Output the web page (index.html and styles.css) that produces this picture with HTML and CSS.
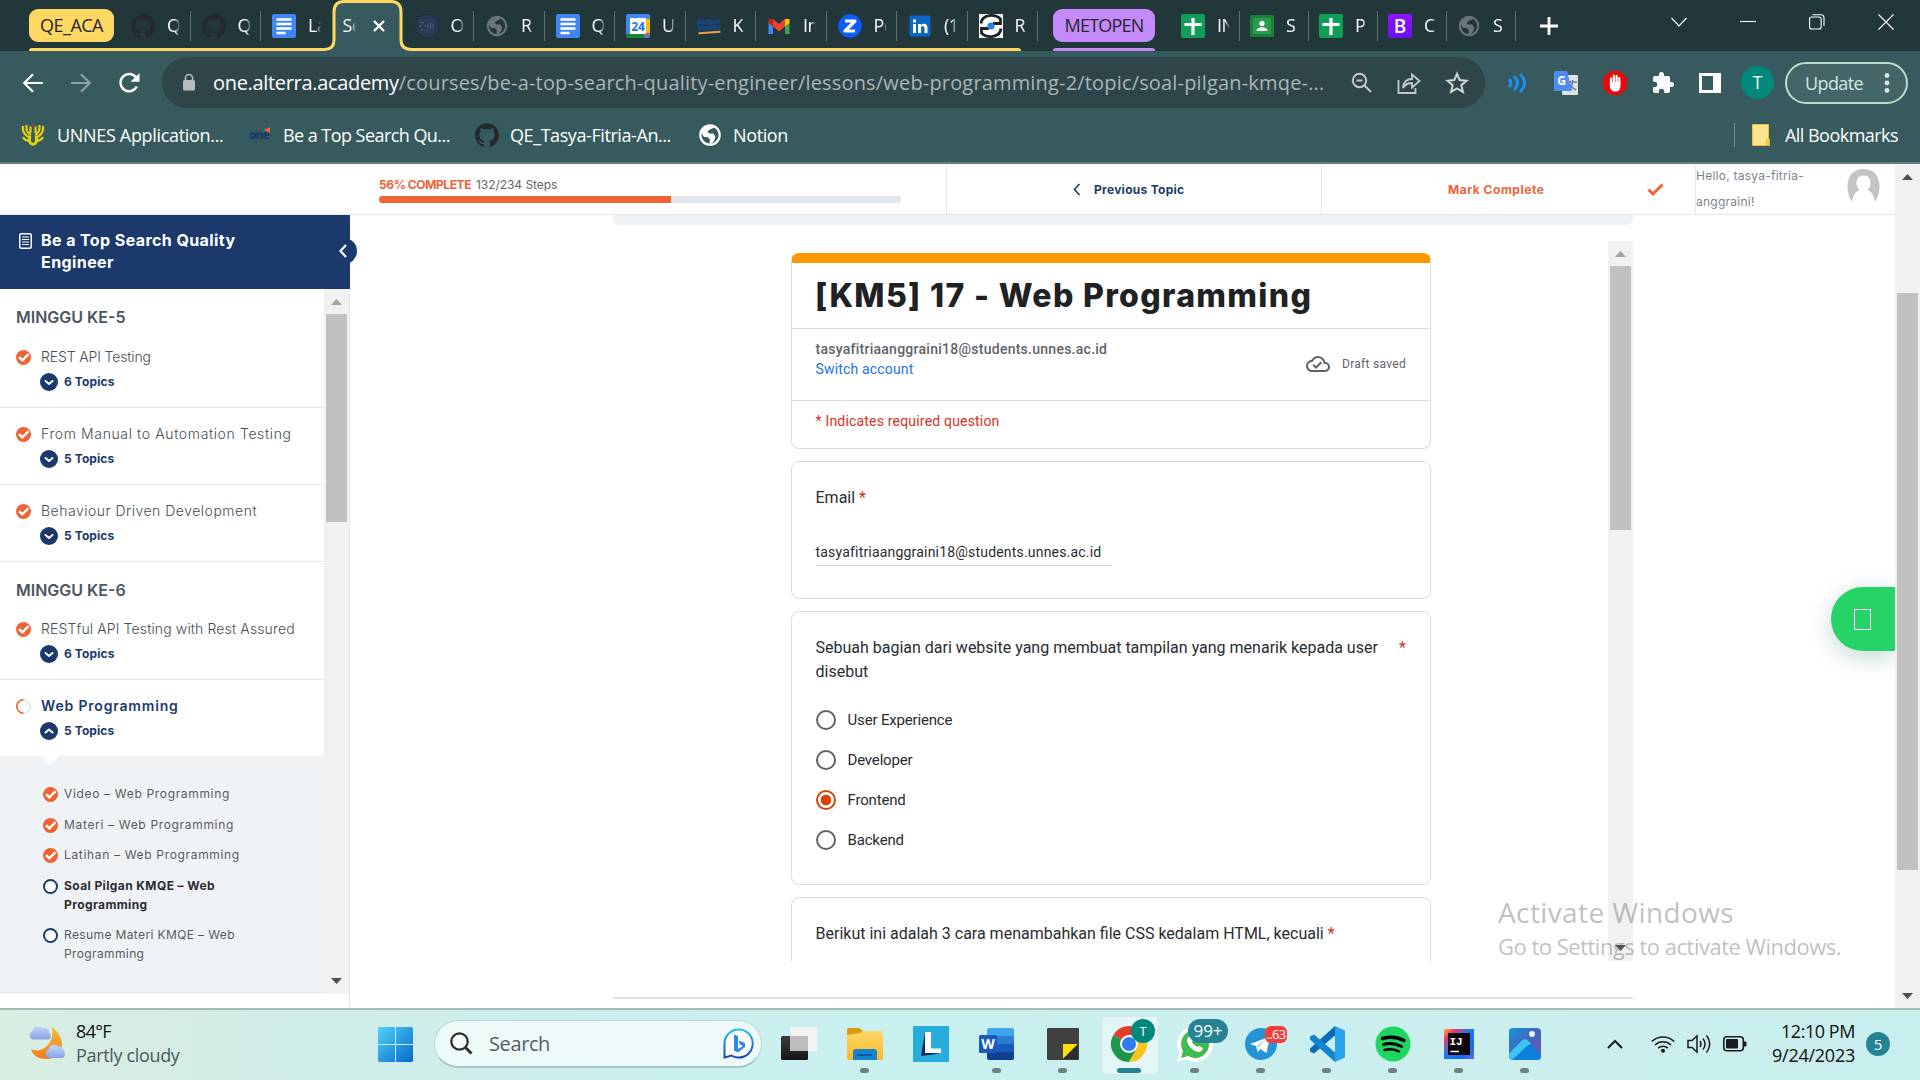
FILE: index.html
```html
<!DOCTYPE html>
<html lang="en">
<head>
<meta charset="utf-8">
<title>Soal Pilgan KMQE – Web Programming</title>
<link rel="stylesheet" href="styles.css">
</head>
<body>
<svg class="defs" aria-hidden="true">
  <defs>
    <linearGradient id="winGrad" x1="0" y1="0" x2="1" y2="1"><stop offset="0" stop-color="#4fd3fb"/><stop offset="1" stop-color="#0669c9"/></linearGradient>
    <linearGradient id="moonGrad" x1="0" y1="0" x2="0" y2="1"><stop offset="0" stop-color="#f3bd3b"/><stop offset="1" stop-color="#f07c1e"/></linearGradient>
    <linearGradient id="cloudGrad" x1="0" y1="0" x2="0" y2="1"><stop offset="0" stop-color="#c5d5f7"/><stop offset="1" stop-color="#86a4e4"/></linearGradient>
    <linearGradient id="bingGrad" x1="0" y1="0" x2="0" y2="1"><stop offset="0" stop-color="#22c1ee"/><stop offset="1" stop-color="#1745b0"/></linearGradient>
    <linearGradient id="folderGrad" x1="0" y1="0" x2="0" y2="1"><stop offset="0" stop-color="#ffd76a"/><stop offset="1" stop-color="#fdb823"/></linearGradient>
    <linearGradient id="ijGrad" x1="0" y1="0" x2="1" y2="1"><stop offset="0" stop-color="#fdb53b"/><stop offset=".2" stop-color="#f5306a"/><stop offset=".45" stop-color="#1c7bf5"/><stop offset=".75" stop-color="#0a6ef5"/><stop offset="1" stop-color="#7a5cf0"/></linearGradient>
    <linearGradient id="photoGrad" x1="0" y1="0" x2="1" y2="1"><stop offset="0" stop-color="#1493dc"/><stop offset=".55" stop-color="#4a62b8"/><stop offset="1" stop-color="#7d52b0"/></linearGradient>
    <linearGradient id="paneGrad" x1="0" y1="0" x2="0" y2="1"><stop offset="0" stop-color="#3a3a3a"/><stop offset="1" stop-color="#161616"/></linearGradient>
    <linearGradient id="bGrad" x1="0" y1="0" x2="0" y2="1"><stop offset="0" stop-color="#9013fe"/><stop offset="1" stop-color="#6a10f4"/></linearGradient>
    <symbol id="github" viewBox="0 0 24 24"><path d="M12 .297c-6.63 0-12 5.373-12 12 0 5.303 3.438 9.8 8.205 11.385.6.113.82-.258.82-.577 0-.285-.01-1.04-.015-2.04-3.338.724-4.042-1.61-4.042-1.61C4.422 18.07 3.633 17.7 3.633 17.7c-1.087-.744.084-.729.084-.729 1.205.084 1.838 1.236 1.838 1.236 1.07 1.835 2.809 1.305 3.495.998.108-.776.417-1.305.76-1.605-2.665-.3-5.466-1.332-5.466-5.93 0-1.31.465-2.38 1.235-3.22-.135-.303-.54-1.523.105-3.176 0 0 1.005-.322 3.3 1.23.96-.267 1.98-.399 3-.405 1.02.006 2.04.138 3 .405 2.28-1.552 3.285-1.23 3.285-1.23.645 1.653.24 2.873.12 3.176.765.84 1.23 1.91 1.23 3.22 0 4.61-2.805 5.625-5.475 5.92.42.36.81 1.096.81 2.22 0 1.606-.015 2.896-.015 3.286 0 .315.21.69.825.57C20.565 22.092 24 17.592 24 12.297c0-6.627-5.373-12-12-12" fill="#24292e"/></symbol>
    <symbol id="docs" viewBox="0 0 24 24"><rect width="24" height="24" rx="2" fill="#4285f4"/><path d="M4.500 5.500h15M4.500 10h15M4.500 14.500h15M4.500 19h9" stroke="#fff" stroke-width="2.400"/></symbol>
    <symbol id="globe" viewBox="0 0 24 24"><circle cx="12" cy="12" r="9.700" fill="none" stroke="currentColor" stroke-width="2.200"/><path d="M3 9.500 6 4.500 12 2.500h4L15.500 5 12 6.500 9.500 8.500l1.500 2h4.500l2 3.500-1.500 4-3.500 3.500-1-1 .5-4-2.500-2.500H6z" fill="currentColor"/></symbol>
    <symbol id="sheets" viewBox="0 0 24 24"><rect width="24" height="24" rx="2" fill="#0f9d58"/><path d="M12 4v17M3.500 10.500h17" stroke="#fff" stroke-width="3.200"/></symbol>
    <symbol id="tick" viewBox="0 0 15 15"><circle cx="7.500" cy="7.500" r="7.500" fill="#f16334"/><path d="M3 7.300 6.400 10.300 12.500 4.200" fill="none" stroke="#fff" stroke-width="2.500"/></symbol>
    <symbol id="ring" viewBox="0 0 15 15"><circle cx="7.500" cy="7.500" r="6.500" fill="#fff" stroke="#1b3a6b" stroke-width="2"/></symbol>
    <symbol id="down" viewBox="0 0 18 18"><circle cx="9" cy="9" r="9" fill="#1b3a6b"/><path d="M5.500 8 9 11l3.500-3" fill="none" stroke="#fff" stroke-width="2" stroke-linecap="round" stroke-linejoin="round"/></symbol>
    <symbol id="up" viewBox="0 0 18 18"><circle cx="9" cy="9" r="9" fill="#1b3a6b"/><path d="M5.500 10.500 9 7.500l3.500 3" fill="none" stroke="#fff" stroke-width="2" stroke-linecap="round" stroke-linejoin="round"/></symbol>
  </defs>
</svg>

<header class="strip">
  <div class="group group-yellow">
    <span class="pill">QE_ACA</span>
    <div class="tab"><svg class="i24"><use href="#github"/></svg><span class="lbl">Q</span></div>
    <div class="tab"><svg class="i24"><use href="#github"/></svg><span class="lbl">Q</span></div>
    <div class="tab last-before"><svg class="i24"><use href="#docs"/></svg><span class="lbl">La</span></div>
    <div class="tab active">
      <svg class="shape" width="86" height="51"><path d="M0 51V49.500Q9 49.500 9 40V12Q9 1.500 19 1.500H66Q76 1.500 76 12V40Q76 49.500 86 49.500V51z" fill="#365a5d"/><path d="M0 49.500Q9 49 9 40V12Q9 1.500 19 1.500H66Q76 1.500 76 12V40Q76 49 86 49.500" fill="none" stroke="#ffd763" stroke-width="3"/></svg>
      <span class="lbl">Se</span>
      <svg class="close" width="12" height="12" viewBox="0 0 12 12"><path d="M1 1l10 10M11 1 1 11" stroke="#fff" stroke-width="2.400"/></svg>
    </div>
    <div class="tab"><svg class="i24" viewBox="0 0 24 24"><circle cx="12" cy="12" r="11.500" fill="#2a3a52" stroke="#1d2440" stroke-dasharray="2 1.500"/><path d="M4 12h3M5 8.500h4M9 12h2.500M13 9.500v5M15.500 9v6M18 10v4M10 16h3M6 15.500h2" stroke="#4a5a78" stroke-width="1.200"/></svg><span class="lbl">O</span></div>
    <div class="tab"><svg class="i24 dim"><use href="#globe"/></svg><span class="lbl">R</span></div>
    <div class="tab"><svg class="i24"><use href="#docs"/></svg><span class="lbl">Q</span></div>
    <div class="tab"><svg class="i24" viewBox="0 0 24 24"><rect width="24" height="24" rx="2" fill="#4285f4"/><path d="M0 20h18v4H2a2 2 0 0 1-2-2z" fill="#188038"/><path d="M20 5h4v14h-4z" fill="#fbbc04"/><path d="M19 19h5l-5 5z" fill="#ea4335"/><path d="M4 4h16v16H4z" fill="#fff"/><text x="12" y="16.500" text-anchor="middle" font-size="12" font-weight="700" fill="#1a73e8">24</text></svg><span class="lbl">U</span></div>
    <div class="tab"><svg class="i24" viewBox="0 0 24 24"><g transform="rotate(-4 12 12)"><text x="0" y="10" font-size="7.500" font-weight="700" font-style="italic" fill="#134a9c" textLength="24">Kampus</text><text x="0" y="16" font-size="7" font-weight="700" font-style="italic" fill="#134a9c" textLength="24">Merdeka</text><path d="M1 18.500h22" stroke="#e9a04b" stroke-width="2"/></g></svg><span class="lbl">K</span></div>
    <div class="tab"><svg class="i24" viewBox="0 0 24 24"><path d="M1.500 20V7h4.500v13z" fill="#4285f4"/><path d="M18 20V7h4.500v13z" fill="#34a853"/><path d="M18 5l4.500 0V9L18 12.500z" fill="#fbbc04"/><path d="M1.500 5H6v7.500L1.500 9z" fill="#c5221f"/><path d="M6 5l6 5 6-5v7.500L12 17.500 6 12.500z" fill="#ea4335"/></svg><span class="lbl">In</span></div>
    <div class="tab"><svg class="i24" viewBox="0 0 24 24"><circle cx="12" cy="12" r="11.700" fill="#0b5cff"/><path d="M7 7h10L7 17h10" fill="none" stroke="#fff" stroke-width="3.200" stroke-linejoin="round"/></svg><span class="lbl">Pe</span></div>
    <div class="tab"><svg class="i24" viewBox="0 0 24 24"><rect x="1.500" y="1.500" width="21" height="21" rx="2" fill="#0a66c2"/><path d="M5 10h3v9H5zM5 5.500h3v3H5zM10 10h3v1.300c2-2.600 6.500-1.800 6.500 2.200V19h-3v-5c0-2.400-3.500-2.300-3.500 0v5h-3z" fill="#fff"/></svg><span class="lbl">(1</span></div>
    <div class="tab"><svg class="i24" viewBox="0 0 24 24"><path d="M0 0h24v24H0z" fill="#fff"/><path d="M2 9.500C3 0 16-.5 21.500 5v4.500H14M22 14.500c-1 9.500-14 10-19.500 4.500v-4.500H10" fill="none" stroke="#222" stroke-width="2.800"/><circle cx="12" cy="12" r="3.600" fill="#2484e0"/></svg><span class="lbl">R</span></div>
  </div>
  <div class="group group-purple"><span class="pill">METOPEN</span></div>
  <div class="rest">
    <div class="tab"><svg class="i24"><use href="#sheets"/></svg><span class="lbl">IN</span></div>
    <div class="tab"><svg class="i24" viewBox="0 0 24 24"><rect y="1" width="24" height="22" rx="1.500" fill="#188038"/><rect x="3" y="4" width="18" height="16" fill="#2a9a4e"/><circle cx="12" cy="9.500" r="2.600" fill="#fff"/><path d="M6.500 17c0-5 11-5 11 0z" fill="#fff"/></svg><span class="lbl">S</span></div>
    <div class="tab"><svg class="i24"><use href="#sheets"/></svg><span class="lbl">P</span></div>
    <div class="tab"><svg class="i24" viewBox="0 0 24 24"><rect width="24" height="24" rx="3" fill="url(#bGrad)"/><text x="12" y="19" text-anchor="middle" font-size="19" font-weight="600" fill="#fff">B</text></svg><span class="lbl">C</span></div>
    <div class="tab"><svg class="i24 dim"><use href="#globe"/></svg><span class="lbl">S</span></div>
  </div>
  <svg class="plus" width="20" height="20" viewBox="0 0 20 20"><path d="M10 1v18M1 10h18" stroke="#fff" stroke-width="2.800"/></svg>
  <div class="wincontrols">
    <svg width="16" height="16" viewBox="0 0 16 16"><path d="M.5 4 8 12l7.500-8"/></svg>
    <svg width="16" height="16" viewBox="0 0 16 16"><path d="M0 7.500h16"/></svg>
    <svg width="16" height="16" viewBox="0 0 16 16"><rect x=".6" y="3" width="11.500" height="12" rx="2"/><path d="M3.500 .8H12q3 0 3 3V12"/></svg>
    <svg width="16" height="16" viewBox="0 0 16 16"><path d="M.5.5l15 15M15.500.5l-15 15"/></svg>
  </div>
</header>

<section class="chrome">
  <div class="toolbar">
    <svg class="nav" width="20" height="20" viewBox="0 0 20 20"><path d="M20 10H1.500M10 1.200 1.200 10l8.800 8.800" fill="none" stroke="#fff" stroke-width="2.200"/></svg>
    <svg class="nav" width="20" height="20" viewBox="0 0 20 20"><path d="M0 10h18.500M10 1.200 18.800 10 10 18.800" fill="none" stroke="#8ea2a4" stroke-width="2.200"/></svg>
    <svg class="nav reload" width="22" height="20" viewBox="0 0 22 20"><path d="M17.800 13.500A8.600 8.600 0 1 1 17 4.500" fill="none" stroke="#fff" stroke-width="2.400"/><path d="M20.500 0v8.800h-9z" fill="#fff"/></svg>
    <div class="omnibox">
      <svg class="lock" width="12" height="17" viewBox="0 0 12 17"><rect y="6" width="12" height="10.500" rx="1.500" fill="#b7bcc1"/><path d="M2.500 7V4a3.500 3.500 0 0 1 7 0v3" fill="none" stroke="#b7bcc1" stroke-width="1.700"/></svg>
      <div class="url"><b>one.alterra.academy</b><span>/courses/be-a-top-search-quality-engineer/lessons/web-programming-2/topic/soal-pilgan-kmqe-...</span></div>
      <svg width="22" height="22" viewBox="0 0 22 22"><g fill="none" stroke="#c3c9ca" stroke-width="2"><circle cx="8.500" cy="8.500" r="6.700"/><path d="M13.500 13.500 20 20M5.500 8.500h6"/></g></svg>
      <svg width="24" height="24" viewBox="0 0 24 24"><g fill="none" stroke="#c3c9ca" stroke-width="1.800"><path d="M1.500 9v13h17v-5"/><path d="M6 17c.5-6 4-9 9-9V3.500L22.500 10 15 16.500V12c-4 0-7 1.500-9 5z"/></g></svg>
      <svg width="24" height="24" viewBox="0 0 24 24"><path d="M12 2.800l2.700 6.300 6.800.6-5.200 4.500 1.600 6.700L12 17.300l-5.900 3.600 1.600-6.700-5.200-4.500 6.800-.6z" fill="none" stroke="#cfd5d5" stroke-width="2"/></svg>
    </div>
    <div class="exts">
      <svg width="24" height="24" viewBox="0 0 24 24"><path d="M4 8q4 4 0 8M9 5q7 7 0 14M15 3q9 9 0 18" fill="none" stroke="#1a8ff5" stroke-width="3"/></svg>
      <svg width="26" height="26" viewBox="0 0 26 26"><rect x="9" y="5" width="16" height="20" rx="1" fill="#dfe1e5"/><path d="M15 12h9M19.500 10v2c-.5 4-2 7-4 8M17 14c1 3 4 5 6 6" stroke="#6b8096" stroke-width="1.500" fill="none"/><path d="M2 1h12l5 20H2a1 1 0 0 1-1-1V2z" fill="#4d8df6"/><text x="8.500" y="15" text-anchor="middle" font-size="12" font-weight="700" fill="#fff">G</text></svg>
      <svg width="24" height="24" viewBox="0 0 24 24"><path d="M7 0h10l7 7v10l-7 7H7l-7-7V7z" fill="#e60a0a"/><path d="M8 14V7.500M10.800 12V4.500M13.600 12V5M16.300 13V7" stroke="#fff" stroke-width="2.200" stroke-linecap="round"/><path d="M6.900 11h10.500v4c0 4-2 5.500-5 5.500s-5.500-2-5.500-5.500z" fill="#fff"/></svg>
      <svg width="24" height="24" viewBox="0 0 24 24"><path d="M20.500 11H19V7c0-1.100-.9-2-2-2h-4V3.500a2.500 2.500 0 0 0-5 0V5H4c-1.100 0-2 .9-2 2v3.800h1.500a2.700 2.700 0 0 1 0 5.400H2V20c0 1.100.9 2 2 2h3.800v-1.500a2.700 2.700 0 0 1 5.400 0V22H17c1.100 0 2-.9 2-2v-4h1.500a2.500 2.500 0 0 0 0-5z" fill="#fff"/></svg>
      <svg width="22" height="22" viewBox="0 0 22 22"><path d="M0 1h22v20H0zM3 4v14h11V4z" fill="#fff" fill-rule="evenodd"/></svg>
      <span class="avatar-t">T</span>
    </div>
    <div class="update"><span>Update</span><svg width="6" height="20" viewBox="0 0 6 20"><g fill="#cfe9df"><circle cx="3" cy="2.500" r="2.400"/><circle cx="3" cy="10" r="2.400"/><circle cx="3" cy="17.500" r="2.400"/></g></svg></div>
  </div>
  <div class="bookmarks">
    <svg class="bm-unnes" width="24" height="24" viewBox="0 0 24 24"><g fill="none" stroke="#e8d20c" stroke-width="2.200"><path d="M10 15C5 14 1 9 2 3M14 15c5-1 9-6 8-12M10 12C7 11 5 7 5.500 2M14 12c3-1 5-5 4.500-10M9 18c-3 0-6-2-7-4M15 18c3 0 6-2 7-4M9.500 10V3.500M14.500 10V3.500"/><path d="M9 13c-4 11 10 11 6 0" stroke-width="3"/></g><circle cx="12" cy="2" r="1.300" fill="#d33"/></svg>
    <span class="t-unnes">UNNES Application...</span>
    <svg class="bm-one" width="22" height="22" viewBox="0 0 22 22"><text x="0" y="15" font-size="12" font-weight="800" fill="#1b3a6b" textLength="21">one</text><path d="M15 6 21 3v6z" fill="#f16334"/></svg>
    <span class="t-one">Be a Top Search Qu...</span>
    <svg class="i24 bm-gh"><use href="#github"/></svg>
    <span class="t-gh">QE_Tasya-Fitria-An...</span>
    <svg class="i24 bm-globe"><use href="#globe"/></svg>
    <span class="t-notion">Notion</span>
    <i class="bm-sep"></i>
    <svg class="bm-folder" width="18" height="22" viewBox="0 0 18 22"><path d="M.5.5h16V13l1 8.500H.5z" fill="#ffe38f" stroke="#e9bf3e"/><path d="M14.500 21.500V16q3-3 3 0v5.500z" fill="#f8cf52" stroke="#e3b22e"/></svg>
    <span class="t-all">All Bookmarks</span>
  </div>
</section>

<main class="page">
  <div class="site">
    <header class="course-head">
      <div class="progress">
        <p><b>56% COMPLETE</b><span>132/234 Steps</span></p>
        <div class="bar"><div class="fill" style="width:56%"></div></div>
      </div>
      <a class="prev"><svg width="8" height="13" viewBox="0 0 8 13"><path d="M6.500 1 1.500 6.500l5 5.500" fill="none" stroke="#1b3a6b" stroke-width="1.600"/></svg>Previous Topic</a>
      <div class="mark"><span>Mark Complete</span><svg width="17" height="13" viewBox="0 0 17 13"><path d="M1.500 6.500 6 11 15.500 1.500" fill="none" stroke="#f16334" stroke-width="3"/></svg></div>
      <div class="hello"><span>Hello, tasya-fitria-<br>anggraini!</span><svg width="33" height="33" viewBox="0 0 33 33"><path d="M5 33C-3 20-1 0 16.500 0S36 20 28 33z" fill="#c4c4c4"/><path d="M16.500 6.500c-5 0-7 3.500-7 7.500 0 3 1 5 3 7-4 1.500-6.500 5-7.500 12h23c-1-7-3.500-10.500-7.500-12 2-2 3-4 3-7 0-4-2-7.500-7-7.500z" fill="#fff"/></svg></div>
    </header>
    <div class="site-body">
      <aside class="side">
        <div class="side-head">
          <svg width="13" height="16" viewBox="0 0 13 16"><rect x=".75" y=".75" width="11.500" height="14.500" rx="1.500" fill="none" stroke="#fff" stroke-width="1.500"/><path d="M3 4h7M3 6.500h7M3 9h7M3 11.500h7" stroke="#fff"/></svg>
          <h1>Be a Top Search Quality Engineer</h1>
          <span class="toggle"><svg width="8" height="14" viewBox="0 0 8 14"><path d="M7 1 1.500 7 7 13" fill="none" stroke="#fff" stroke-width="2.200"/></svg></span>
        </div>
        <div class="side-body">
          <div class="lessons">
            <h2 class="first">MINGGU KE-5</h2>
            <div class="lesson"><h3 class="l-rest"><svg class="i15"><use href="#tick"/></svg>REST API Testing</h3><p><svg class="i18"><use href="#down"/></svg>6 Topics</p></div>
            <div class="lesson"><h3 class="l-manual"><svg class="i15"><use href="#tick"/></svg>From Manual to Automation Testing</h3><p><svg class="i18"><use href="#down"/></svg>5 Topics</p></div>
            <div class="lesson"><h3 class="l-bdd"><svg class="i15"><use href="#tick"/></svg>Behaviour Driven Development</h3><p><svg class="i18"><use href="#down"/></svg>5 Topics</p></div>
            <h2>MINGGU KE-6</h2>
            <div class="lesson"><h3 class="l-assured"><svg class="i15"><use href="#tick"/></svg>RESTful API Testing with Rest Assured</h3><p><svg class="i18"><use href="#down"/></svg>6 Topics</p></div>
            <div class="lesson current"><h3><svg class="i15" viewBox="0 0 15 15"><circle cx="7.500" cy="7.500" r="6.700" fill="none" stroke="#dfe4ee" stroke-width="1.500"/><path d="M7.500.8a6.700 6.700 0 0 0 0 13.400" fill="none" stroke="#f16334" stroke-width="1.600"/></svg>Web Programming</h3><p><svg class="i18"><use href="#up"/></svg>5 Topics</p></div>
            <ul class="topics">
              <li><svg class="i15"><use href="#tick"/></svg><span>Video – Web Programming</span></li>
              <li><svg class="i15"><use href="#tick"/></svg><span>Materi – Web Programming</span></li>
              <li><svg class="i15"><use href="#tick"/></svg><span>Latihan – Web Programming</span></li>
              <li class="now"><svg class="i15"><use href="#ring"/></svg><span>Soal Pilgan KMQE – Web Programming</span></li>
              <li class="resume"><svg class="i15"><use href="#ring"/></svg><span>Resume Materi KMQE – Web Programming</span></li>
            </ul>
          </div>
          <div class="scroll scroll-side"><i class="arr up light"></i><i class="thumb"></i><i class="arr down"></i></div>
        </div>
      </aside>
      <section class="content">
        <div class="banner"></div>
        <div class="frame">
          <div class="form">
            <article class="card intro">
              <h2>[KM5] 17 - Web Programming</h2>
              <div class="account">
                <div><b>tasyafitriaanggraini18@students.unnes.ac.id</b><a>Switch account</a></div>
                <p><svg width="24" height="24" viewBox="0 0 24 24"><path d="M19.350 10.040A7.490 7.490 0 0 0 12 4C9.110 4 6.600 5.640 5.350 8.040A5.994 5.994 0 0 0 0 14c0 3.310 2.690 6 6 6h13c2.760 0 5-2.240 5-5 0-2.640-2.050-4.780-4.650-4.960zM19 18H6c-2.210 0-4-1.790-4-4 0-2.050 1.530-3.760 3.560-3.970l1.070-.11.5-.95A5.469 5.469 0 0 1 12 6c2.620 0 4.880 1.860 5.390 4.430l.3 1.500 1.530.11A2.980 2.980 0 0 1 22 15c0 1.650-1.350 3-3 3zm-9-3.820-2.090-2.090L6.500 13.500 10 17l6.010-6.010-1.410-1.410z" fill="#5f6368"/></svg>Draft saved</p>
              </div>
              <p class="required">* Indicates required question</p>
            </article>
            <article class="card email"><h3>Email <em>*</em></h3><p>tasyafitriaanggraini18@students.unnes.ac.id</p></article>
            <article class="card question">
              <h3><span>Sebuah bagian dari website yang membuat tampilan yang menarik kepada user disebut</span><em>*</em></h3>
              <ul>
                <li><i class="radio"></i>User Experience</li>
                <li><i class="radio"></i>Developer</li>
                <li><i class="radio on"></i>Frontend</li>
                <li><i class="radio"></i>Backend</li>
              </ul>
            </article>
            <article class="card next"><h3>Berikut ini adalah 3 cara menambahkan file CSS kedalam HTML, kecuali <em>*</em></h3></article>
          </div>
          <div class="scroll scroll-frame"><i class="arr up light"></i><i class="thumb"></i><i class="arr down"></i></div>
        </div>
        <div class="rule"></div>
      </section>
    </div>
    <a class="fab"><i></i></a>
  </div>
  <div class="scroll scroll-page"><i class="arr up"></i><i class="thumb"></i><i class="arr down"></i></div>
  <div class="activate"><p>Activate Windows</p><p>Go to Settings to activate Windows.</p></div>
</main>

<footer class="taskbar">
  <div class="weather">
    <svg width="38" height="36" viewBox="0 0 38 36"><path d="M24 2c5 4 10 10 10 18S27 34 19 34 5 31 3 24c9 5 24-3 21-22z" fill="url(#moonGrad)"/><path d="M5 14.500a4.500 4.500 0 0 1-.5-8.500C5 2 10-1 15 3.500c3-1 7 1 6 4 3 1.500 2.500 7-1 7z" fill="url(#cloudGrad)"/><path d="M21 33a4.500 4.500 0 0 1-.5-8.500c.5-4.500 6-6.500 10-3 3-1 5 1 4.500 3.500 3 1.500 2.500 8-1 8z" fill="url(#cloudGrad)"/></svg>
    <div><p class="temp">84°F</p><p class="sky">Partly cloudy</p></div>
  </div>
  <svg class="win" width="35" height="35" viewBox="0 0 35 35"><path d="M1 0h16v17H0V1zM18 0h16l1 1v16H18zM0 18h17v17H1l-1-1zM18 18h17v16l-1 1H18z" fill="url(#winGrad)"/></svg>
  <div class="search">
    <svg width="23" height="23" viewBox="0 0 23 23"><circle cx="9.500" cy="9.500" r="8.200" fill="#fff" fill-opacity=".5" stroke="#2b2b2b" stroke-width="2.200"/><path d="M15.500 15.500 21.500 21.500" stroke="#2b2b2b" stroke-width="2.800"/></svg>
    <span>Search</span>
    <svg width="31" height="31" viewBox="0 0 31 31"><path d="M15.500 1.500a14 14 0 1 1-7 26L1.500 29.500V15.500a14 14 0 0 1 14-14z" fill="#fff" stroke="url(#bingGrad)" stroke-width="2"/><path d="M11 6.500l4 1.500v13l5-3-3-1.500-1.500-4 6.500 2.500v4L15 24.500l-4-2z" fill="#2a8be8"/></svg>
  </div>
  <nav class="apps">
    <span class="app"><svg viewBox="0 0 36 36"><rect x="0" y="10" width="27" height="24" rx="1.500" fill="url(#paneGrad)"/><rect x="9" y="1" width="27" height="24" rx="1" fill="#f4f4f4"/><path d="M9 10h18v15H9z" fill="#bdbdbd"/></svg></span>
    <span class="app run"><svg viewBox="0 0 36 36"><path d="M0 4q0-2 2-2h10l4 3-2 4H0z" fill="#dd9a0b"/><path d="M0 9l13-2 3-2h18q2 0 2 2v25q0 2-2 2H2q-2 0-2-2z" fill="url(#folderGrad)"/><path d="M6 34v-8q0-3 3-3h18q3 0 3 3v8z" fill="#1583d0"/><path d="M10 29h15" stroke="#0b5a9a" stroke-width="1.800"/></svg></span>
    <span class="app"><svg viewBox="0 0 36 36"><path d="M0 0h36v36H0z" fill="#27acdc"/><path d="M12 6 8 30l19-2.500-12-1z" fill="#0d2d63"/><path d="M12 6h6v16.500h10V27H12z" fill="#fff"/></svg></span>
    <span class="app run"><svg viewBox="0 0 36 36"><path d="M8 4q0-2 2-2h23q2 0 2 2v6H8z" fill="#41a5ee"/><path d="M8 10h27v8H8z" fill="#2b7cd3"/><path d="M8 18h27v8H8z" fill="#185abd"/><path d="M8 26h27v6q0 2-2 2H10q-2 0-2-2z" fill="#103f91"/><rect y="9" width="18" height="18" rx="1.500" fill="#185abd"/><text x="9" y="23" text-anchor="middle" font-size="14" font-weight="700" fill="#fff">W</text></svg></span>
    <span class="app run"><svg viewBox="0 0 36 36"><rect x="2" y="2" width="32" height="32" rx="1" fill="#404040"/><path d="M18 18h15L18 33z" fill="#ffdf00"/><path d="M33 18v15H18z" fill="#2b2b2b"/></svg></span>
    <span class="app run focus"><svg viewBox="0 0 36 36"><circle cx="18" cy="18" r="18" fill="#fff"/><path d="M18 18 2.400 9A18 18 0 0 1 33.600 9z" fill="#e33b2e"/><path d="M18 18 2.400 9A18 18 0 0 0 18 36l8-13.500z" fill="#1f9549"/><path d="M18 9h15.600A18 18 0 0 1 18 36l8-14z" fill="#fcc31e"/><circle cx="18" cy="18" r="9" fill="#fff"/><circle cx="18" cy="18" r="7" fill="#2f7cf0"/></svg><em class="b-t">T</em></span>
    <span class="app run"><svg viewBox="0 0 36 36"><path d="M0 36l2.500-9A18 18 0 1 1 9 33.500z" fill="#fff"/><path d="M4 32l2-7a14 14 0 1 1 5 5z" fill="#3fbb50"/><path d="M11.500 11c3-2 4 1 4.500 3-1.500 1.500-1.500 2 1 4.500s3.500 2.500 5 1.500c2.500 1 5 2 3 4.500-3 3-8 .5-11-2.500s-5.500-8-2.500-11z" fill="#fff"/></svg><em class="b-w">99+</em></span>
    <span class="app run"><svg viewBox="0 0 36 36"><circle cx="18" cy="18" r="16" fill="#2494d4"/><path d="M7 18 27 10.500 23.500 27l-6-4-3 3-1.500-6z" fill="#fff"/><path d="M13 20l10-6.500-7.500 8z" fill="#b8d8ec"/></svg><em class="b-g">..63</em></span>
    <span class="app run"><svg viewBox="0 0 36 36"><path d="M26 0v9.500L5 27.500 1 25.500v-3z" fill="#0a6cb4"/><path d="M26 36V26.500L5 8.500 1 10.500v3z" fill="#1384d0"/><path d="M26 0l10 4.500v27L26 36z" fill="#2aa2f0"/></svg></span>
    <span class="app run"><svg viewBox="0 0 36 36"><circle cx="18" cy="18" r="17.500" fill="#1ed760"/><g fill="none" stroke="#000" stroke-linecap="round"><path d="M7.500 12.500c7-2 15-1.500 21.500 2" stroke-width="3.600"/><path d="M8.500 18.500c6-1.700 12.500-1 18 2" stroke-width="3"/><path d="M9.500 24c5-1.300 10-.8 14.500 1.500" stroke-width="2.500"/></g></svg></span>
    <span class="app run"><svg viewBox="0 0 36 36"><path d="M3 3h30v30H3z" fill="url(#ijGrad)"/><path d="M7 7h22v22H7z" fill="#0a0308"/><text x="8.500" y="18.500" font-size="11" font-weight="700" font-family="'Liberation Mono', monospace" fill="#fff">IJ</text><path d="M9.500 25.500h8.500" stroke="#fff" stroke-width="1.500"/></svg></span>
    <span class="app run"><svg viewBox="0 0 36 36"><rect x="2" y="2" width="32" height="32" rx="4" fill="url(#photoGrad)"/><circle cx="25" cy="8" r="2.900" fill="#f3f3f3"/><path d="M3 32 15 15.500q3-3.500 6 0l13 13V30q0 4-4 4H6z" fill="#0f7fdc"/><path d="M2 27.500 14.500 15q3.500-3.500 7 0l3 3q-2.500 0-4 1.500L5 34q-3-.5-3-4z" fill="#3cc4f2"/></svg></span>
  </nav>
  <div class="tray">
    <svg class="chev" width="16" height="10" viewBox="0 0 16 10"><path d="M1 9l7-7 7 7" fill="none" stroke="#1c1c1c" stroke-width="2"/></svg>
    <svg class="wifi" width="24" height="18" viewBox="0 0 24 18"><g fill="none" stroke="#1c1c1c" stroke-width="1.600"><path d="M.8 6.500a16 16 0 0 1 22.400 0M4 10a11.500 11.500 0 0 1 16 0M7.200 13.200a7 7 0 0 1 9.600 0"/></g><circle cx="12" cy="15.800" r="2" fill="#1c1c1c"/></svg>
    <svg class="vol" width="24" height="20" viewBox="0 0 24 20"><g fill="none" stroke="#1c1c1c" stroke-width="1.500"><path d="M1 6.500h4L10 2v16l-5-4.500H1zM13 7q2 3 0 6M16 4.500q4 5.500 0 11M19.500 1.500q6.500 8.500 0 17"/></g></svg>
    <svg class="bat" width="24" height="16" viewBox="0 0 24 16"><rect x=".8" y=".8" width="19.500" height="14" rx="3" fill="none" stroke="#1c1c1c" stroke-width="1.600"/><rect x="3" y="3" width="12" height="9.500" rx="1" fill="#1c1c1c"/><path d="M21 5.500h1.500q1 0 1 1v3q0 1-1 1H21z" fill="#1c1c1c"/></svg>
    <div class="clock"><p class="hour">12:10 PM</p><p class="date">9/24/2023</p></div>
    <span class="count">5</span>
  </div>
</footer>
</body>
</html>
```
FILE: styles.css
```css
* { box-sizing: border-box; margin: 0; padding: 0; }
body { width: 1920px; height: 1080px; overflow: hidden; background: #fff; display: flex; flex-direction: column; font-family: "Open Sans", "Noto Sans", sans-serif; }
svg { display: block; flex: none; overflow: visible; }
ul { list-style: none; }
em { font-style: normal; }
.defs { position: absolute; width: 0; height: 0; }
.i24 { width: 24px; height: 24px; }
.i15 { width: 15px; height: 15px; }
.i18 { width: 18px; height: 18px; }
.dim { color: #6b7579; transform: scale(.95); }

/* tab strip */
.strip { height: 51px; background: #223739; display: flex; padding-left: 29px; color: #fff; font-size: 18px; flex: none; }
.group { position: relative; display: flex; align-items: center; }
.group::after { content: ""; position: absolute; left: 0; bottom: 0; height: 3px; border-radius: 3px 3px 0 0; }
.group-yellow::after { right: 17px; background: #ffd763; }
.group-purple { margin-left: 15px; }
.group-purple::after { right: 0; background: #c58af9; }
.pill { height: 33px; line-height: 32px; border-radius: 9px; color: #23262a; text-align: center; }
.group-yellow .pill { width: 85px; margin-right: 6px; background: #ffd763; letter-spacing: -.5px; }
.group-purple .pill { width: 102px; background: #c58af9; letter-spacing: -.79px; }
.tab { position: relative; width: 70.5px; height: 51px; display: flex; align-items: center; gap: 12px; padding-left: 11px; }
.tab::after { content: ""; position: absolute; right: 0; top: 11px; width: 1px; height: 30px; background: #5f7072; }
.last-before::after, .active::after { display: none; }
.lbl { width: 13px; margin-top: -2px; white-space: nowrap; line-height: 26px; letter-spacing: -.5px; -webkit-mask-image: linear-gradient(90deg, #000 60%, transparent); mask-image: linear-gradient(90deg, #000 60%, transparent); }
.active { z-index: 1; gap: 17px; width: 72px; }
.active .lbl { position: relative; }
.active .close { position: relative; }
.shape { position: absolute; left: -7px; top: 0; }
.rest { display: flex; margin-left: 16px; }
.rest .tab { width: 69px; padding-left: 10px; }
.plus { margin: 16px 0 0 23px; }
.wincontrols { display: flex; gap: 53px; margin: 14px 26px 0 auto; }
.wincontrols svg { fill: none; stroke: #fff; stroke-width: 1.1; }

/* toolbar */
.chrome { height: 113px; background: #365a5d; border-bottom: 2px solid #62807f; flex: none; }
.toolbar { height: 63px; display: flex; align-items: center; padding-left: 23px; }
.nav { margin-right: 28px; }
.reload { margin-right: 21px; }
.omnibox { width: 1323px; height: 51px; border-radius: 26px; background: #2e4549; display: flex; align-items: center; padding-left: 21px; }
.lock { margin-right: 18px; }
.url { width: 1138px; font-size: 20px; line-height: 28px; white-space: nowrap; color: #a9b6b8; }
.url b { font-weight: 400; color: #fff; letter-spacing: -.32px; }
.url span { letter-spacing: .17px; }
.omnibox svg + svg { margin-left: 24px; }
.exts { display: flex; align-items: center; gap: 24px; margin-left: 20px; }
.avatar-t { width: 33px; height: 33px; margin-left: -4px; border-radius: 50%; background: #00897b; color: #fff; font-size: 18px; line-height: 33px; text-align: center; }
.update { width: 123px; height: 42px; margin-left: 11px; border: 2px solid #b9dccb; border-radius: 21px; background: #446669; color: #cfe9df; font-size: 18px; display: flex; align-items: center; padding-left: 18px; letter-spacing: -.6px; }
.update svg { margin-left: 21px; }
.bookmarks { height: 42px; display: flex; align-items: center; padding-left: 21px; color: #fff; font-size: 18px; white-space: nowrap; }
.bookmarks span { line-height: 26px; margin-top: -1px; }
.t-unnes { width: 192px; margin-left: 12px; letter-spacing: -.32px; }
.t-one { width: 192px; margin-left: 12px; letter-spacing: -.55px; }
.t-gh { width: 188px; margin-left: 11px; letter-spacing: -.42px; }
.bm-globe { color: #fff; }
.t-notion { margin-left: 11px; letter-spacing: -.37px; }
.bm-sep { width: 1px; height: 24px; background: #6d8a8c; margin-left: auto; }
.bm-folder { margin-left: 17px; }
.t-all { width: 135px; margin-left: 15px; letter-spacing: -.53px; }

/* scrollbars */
.scroll { width: 25px; background: #f1f1f1; display: flex; flex-direction: column; align-items: center; flex: none; }
.arr { width: 11px; height: 6px; background: #505050; flex: none; }
.arr.up { margin: 10px 0 9px; clip-path: polygon(50% 0, 100% 100%, 0 100%); }
.arr.down { margin: auto 0 10px; clip-path: polygon(0 0, 100% 0, 50% 100%); }
.arr.light { background: #a3a3a3; }
.thumb { width: 21px; background: #c1c1c1; flex: none; }
.scroll-side { height: 705px; }
.scroll-side .thumb { height: 208px; }
.scroll-frame .thumb { height: 264px; }
.scroll-page .thumb { height: 577px; margin-top: 104px; }
.scroll-page .arr.down { margin-bottom: 9px; }

/* course page */
.page { position: relative; height: 844px; display: flex; flex: none; overflow: hidden; font-family: Inter, "Open Sans", sans-serif; }
.site { position: relative; width: 1895px; display: flex; flex-direction: column; overflow: hidden; }
.course-head { height: 51px; flex: none; border-bottom: 1px solid #e2e7ee; display: flex; padding-left: 379px; font-size: 12px; }
.progress { width: 567px; padding-top: 11px; }
.progress p { display: flex; gap: 5px; line-height: 20px; color: #60666b; }
.progress b { width: 92px; color: #f16334; letter-spacing: -.41px; white-space: nowrap; }
.progress span { letter-spacing: -.05px; }
.bar { width: 522px; height: 7px; margin-top: 1px; border-radius: 4px; background: #e2e7ee; overflow: hidden; }
.fill { height: 7px; background: #f16334; }
.prev { width: 375px; border-left: 1px solid #e2e7ee; display: flex; align-items: center; padding-left: 126px; gap: 13px; font-weight: 700; color: #1b3a6b; letter-spacing: .28px; }
.mark { width: 374px; border-left: 1px solid #e2e7ee; display: flex; align-items: center; padding-left: 126px; gap: 102px; font-weight: 700; color: #f16334; letter-spacing: .52px; }
.mark span { width: 97px; white-space: nowrap; }
.hello { border-left: 1px solid #e2e7ee; display: flex; line-height: 26px; color: #7c858e; letter-spacing: .25px; }
.hello span { width: 151px; margin-top: -1px; white-space: nowrap; }
.hello svg { margin-top: 5px; }
.site-body { display: flex; flex: 1; min-height: 0; }
.side { width: 350px; border-right: 1px solid #e2e7ee; flex: none; display: flex; flex-direction: column; }
.side-head { position: relative; width: 350px; height: 74px; background: #1b3a6b; display: flex; gap: 9px; padding: 14px 0 0 19px; flex: none; }
.side-head > svg { margin-top: 4px; }
.side-head h1 { width: 220px; color: #fff; font-size: 16px; font-weight: 700; line-height: 22px; letter-spacing: .41px; }
.toggle { position: absolute; right: -7px; top: 23px; width: 26px; height: 26px; border-radius: 50%; background: #1b3a6b; display: grid; place-items: center; padding-right: 3px; }
.side-body { display: flex; flex: 1; min-height: 0; }
.lessons { width: 324px; flex: none; }
.lessons h2 { height: 41px; padding: 17px 0 0 16px; font-size: 16px; font-weight: 600; line-height: 22px; color: #4d5560; }
.lessons h2.first { height: 42px; }
.lesson { height: 77px; padding: 15px 0 0 16px; border-bottom: 1px solid #e2e7ee; }
.lesson h3 { display: flex; align-items: center; gap: 10px; font-size: 14px; font-weight: 300; line-height: 22px; color: #474e51; white-space: nowrap; }
.lesson p { display: flex; align-items: center; gap: 6px; margin: 4px 0 0 24px; font-size: 12px; font-weight: 700; line-height: 20px; color: #1b3a6b; letter-spacing: .1px; }
.l-rest { letter-spacing: -.13px; }
.lesson .l-manual { letter-spacing: .62px; }
.lesson .l-bdd { letter-spacing: .5px; }
.lesson .l-assured { letter-spacing: .13px; }
.current { height: 76px; border-bottom: 0; }
.lesson.current h3 { font-weight: 600; color: #1b3a6b; letter-spacing: .82px; }
.topics { position: relative; height: 237px; padding: 28px 0 0 43px; background: #eff3f6; border-bottom: 1px solid #e2e7ee; display: flex; flex-direction: column; gap: 11.5px; }
.topics::before { content: ""; position: absolute; left: 41px; top: 0; border: solid transparent; border-width: 9px 9px 0; border-top-color: #fff; }
.topics li { display: flex; gap: 6px; font-size: 12px; line-height: 19px; color: #555c60; letter-spacing: .67px; }
.topics svg { margin-top: 3px; }
.topics span { width: 190px; }
.topics .now { font-weight: 700; color: #2b2d30; letter-spacing: .4px; }
.topics .resume { letter-spacing: .38px; }

/* embedded form */
.content { padding-left: 263px; }
.banner { width: 1020px; height: 10px; border-radius: 0 0 6px 6px; background: #eff3f6; }
.frame { width: 1020px; height: 720px; margin-top: 16px; display: flex; overflow: hidden; }
.form { width: 995px; padding: 12px 0 0 178px; font-family: Roboto, sans-serif; color: #2a2c30; }
.card { width: 640px; border: 1px solid #dadce0; border-radius: 8px; background: #fff; margin-bottom: 12px; }
.intro { height: 196px; border-top: 10px solid #ff9800; }
.intro h2 { height: 66px; padding-left: 23px; border-bottom: 1px solid #dadce0; font: 800 32px/66px Inter, sans-serif; letter-spacing: 1.34px; color: #202124; }
.account { height: 72px; padding: 10px 24px 0 23.5px; border-bottom: 1px solid #dadce0; display: flex; justify-content: space-between; font-size: 14px; line-height: 20px; }
.account b { display: block; font-weight: 500; color: #5f6368; letter-spacing: .26px; }
.account a { color: #1a73e8; letter-spacing: .17px; }
.account p { display: flex; align-items: center; gap: 12px; height: 50px; font-size: 12px; color: #5f6368; letter-spacing: .29px; }
.required { padding: 10px 23.5px; font-size: 14px; line-height: 20px; color: #d93025; letter-spacing: .19px; }
.card h3 { font-size: 16px; font-weight: 400; line-height: 24px; }
.card em { color: #d93025; }
.email { height: 138px; padding: 24px 23.5px; }
.email p { width: 296px; height: 36px; margin-top: 20px; padding-top: 12px; border-bottom: 1px solid #dadce0; font-size: 14px; line-height: 20px; letter-spacing: .19px; }
.question { height: 274px; padding: 24px 24px 24px 23.5px; }
.question h3 { display: flex; justify-content: space-between; }
.question h3 span { width: 570px; }
.question ul { margin-top: 16px; }
.question li { height: 40px; display: flex; align-items: center; gap: 12px; font-size: 15px; letter-spacing: -.17px; }
.radio { width: 20px; height: 20px; border: 2px solid #5f6368; border-radius: 50%; }
.radio.on { border-color: #db4400; background: radial-gradient(circle, #db4400 5px, transparent 5.6px); }
.next { height: 180px; padding: 24px 23.5px; }
.rule { width: 1020px; height: 2px; margin-top: 36px; background: #dfe5e9; }
.fab { position: absolute; right: 0; top: 423px; width: 64px; height: 64px; border-radius: 32px 0 0 32px; background: #25d366; box-shadow: 0 6px 24px rgba(7, 94, 84, .24); padding: 22px 0 0 23px; }
.fab i { display: block; width: 17px; height: 21px; border: 1px solid #fff; }
.activate { position: absolute; left: 1498px; top: 727px; color: rgba(100, 100, 100, .42); white-space: nowrap; font-family: "Open Sans", sans-serif; }
.activate p { font-size: 28px; line-height: 42px; letter-spacing: .39px; }
.activate p + p { font-size: 22px; line-height: 27px; letter-spacing: -.5px; }

/* taskbar */
.taskbar { height: 72px; flex: none; border-top: 2px solid #a6bab8; background: linear-gradient(90deg, #daeee2, #d1ece7 14%, #c9f0ee 38%, #c8f0ee 50%, #cceeef 75%, #c7efed); display: flex; align-items: flex-start; padding-left: 28px; color: #111; }
.weather { display: flex; gap: 10px; width: 350px; padding-top: 15px; font-size: 18px; line-height: 24px; }
.weather div { margin-top: -6px; }
.temp { letter-spacing: -.65px; }
.sky { letter-spacing: -.34px; color: #4c5859; }
.win { margin-top: 17px; }
.search { width: 328px; height: 48px; margin: 10px 0 0 21px; border: 1px solid #b9dcda; border-bottom: 2px solid #a5c9c7; border-radius: 24px; background: #eefafa; display: flex; align-items: center; padding-left: 15px; font-size: 20px; color: #555e5e; letter-spacing: -.39px; }
.search span { width: 250px; padding-left: 16px; line-height: 26px; }
.apps { display: flex; margin-left: 4px; }
.app { position: relative; width: 66px; height: 70px; padding: 16px 15px 0; }
.app > svg { position: relative; width: 36px; height: 36px; }
.run::after { content: ""; position: absolute; left: 28px; top: 58px; width: 9px; height: 5px; border-radius: 3px; background: #6e8382; }
.focus::before { content: ""; position: absolute; left: 5px; top: 6px; width: 56px; height: 57px; border-radius: 6px; background: #e3f5f5; border: 1px solid #d3e9e9; }
.focus::after { left: 21px; width: 24px; background: #268394; }
.app em { position: absolute; color: #fff; text-align: center; }
.b-t { left: 35px; top: 9px; width: 24px; height: 24px; border-radius: 50%; background: #00897b; font-size: 13px; line-height: 24px; }
.b-w { left: 26px; top: 9px; width: 40px; height: 24px; border-radius: 12px; background: #268394; font-size: 17px; line-height: 23px; }
.b-g { left: 37px; top: 16px; width: 22px; height: 17px; border-radius: 6px; background: #f43c38; font-size: 13px; line-height: 17px; letter-spacing: -.6px; }
.tray { display: flex; align-items: center; height: 68px; margin-left: 49px; }
.chev { margin-right: 28px; }
.wifi { margin-right: 12px; }
.vol { margin-right: 12px; }
.clock { width: 108px; margin-top: -2px; text-align: right; font-size: 18px; line-height: 24px; }
.hour { letter-spacing: -.45px; }
.date { letter-spacing: -.25px; }
.count { width: 24px; height: 24px; margin-left: 11px; border-radius: 50%; background: #268394; color: #fff; font-size: 15px; line-height: 24px; text-align: center; }
```
